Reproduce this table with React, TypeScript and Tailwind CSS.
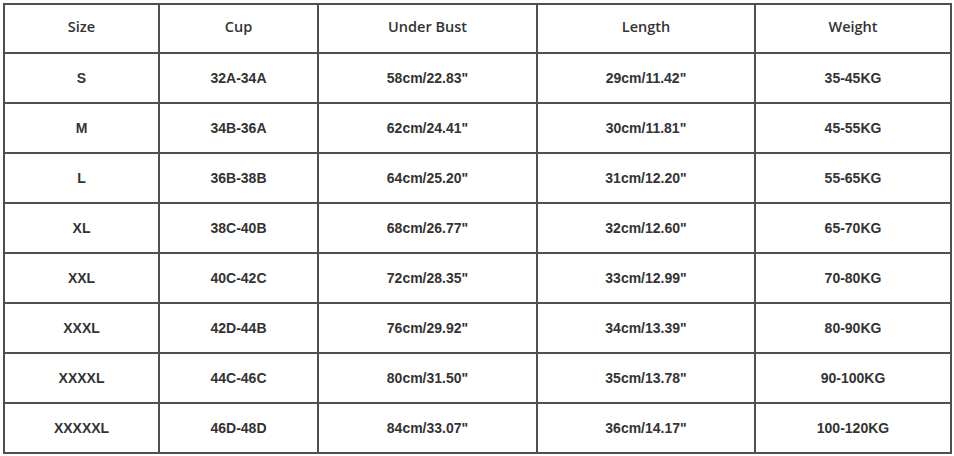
const headers = ['Size', 'Cup', 'Under Bust', 'Length', 'Weight'];

const rows = [
  ['S', '32A-34A', '58cm/22.83"', '29cm/11.42"', '35-45KG'],
  ['M', '34B-36A', '62cm/24.41"', '30cm/11.81"', '45-55KG'],
  ['L', '36B-38B', '64cm/25.20"', '31cm/12.20"', '55-65KG'],
  ['XL', '38C-40B', '68cm/26.77"', '32cm/12.60"', '65-70KG'],
  ['XXL', '40C-42C', '72cm/28.35"', '33cm/12.99"', '70-80KG'],
  ['XXXL', '42D-44B', '76cm/29.92"', '34cm/13.39"', '80-90KG'],
  ['XXXXL', '44C-46C', '80cm/31.50"', '35cm/13.78"', '90-100KG'],
  ['XXXXXL', '46D-48D', '84cm/33.07"', '36cm/14.17"', '100-120KG'],
];

export default function App() {
  return (
    <div className="w-[954px] h-[456px] bg-white pl-[3px] pt-[3px]">
      <div className="grid w-[949px] grid-cols-[153px_157px_217px_216px_194px] grid-rows-[47px_repeat(8,48px)] gap-[2px] bg-[#4f4f4f] p-[2px]">
        {headers.map((h) => (
          <div
            key={h}
            className="flex items-center justify-center bg-white pb-[3px] text-[14.5px] font-semibold text-[#333] [font-family:'Open_Sans',sans-serif]"
          >
            {h}
          </div>
        ))}
        {rows.map((row) =>
          row.map((cell, i) => (
            <div
              key={row[0] + i}
              className="flex items-center justify-center bg-white text-[14px] font-bold text-[#333] [font-family:'Liberation_Sans',Arial,sans-serif]"
            >
              {cell}
            </div>
          )),
        )}
      </div>
    </div>
  );
}
